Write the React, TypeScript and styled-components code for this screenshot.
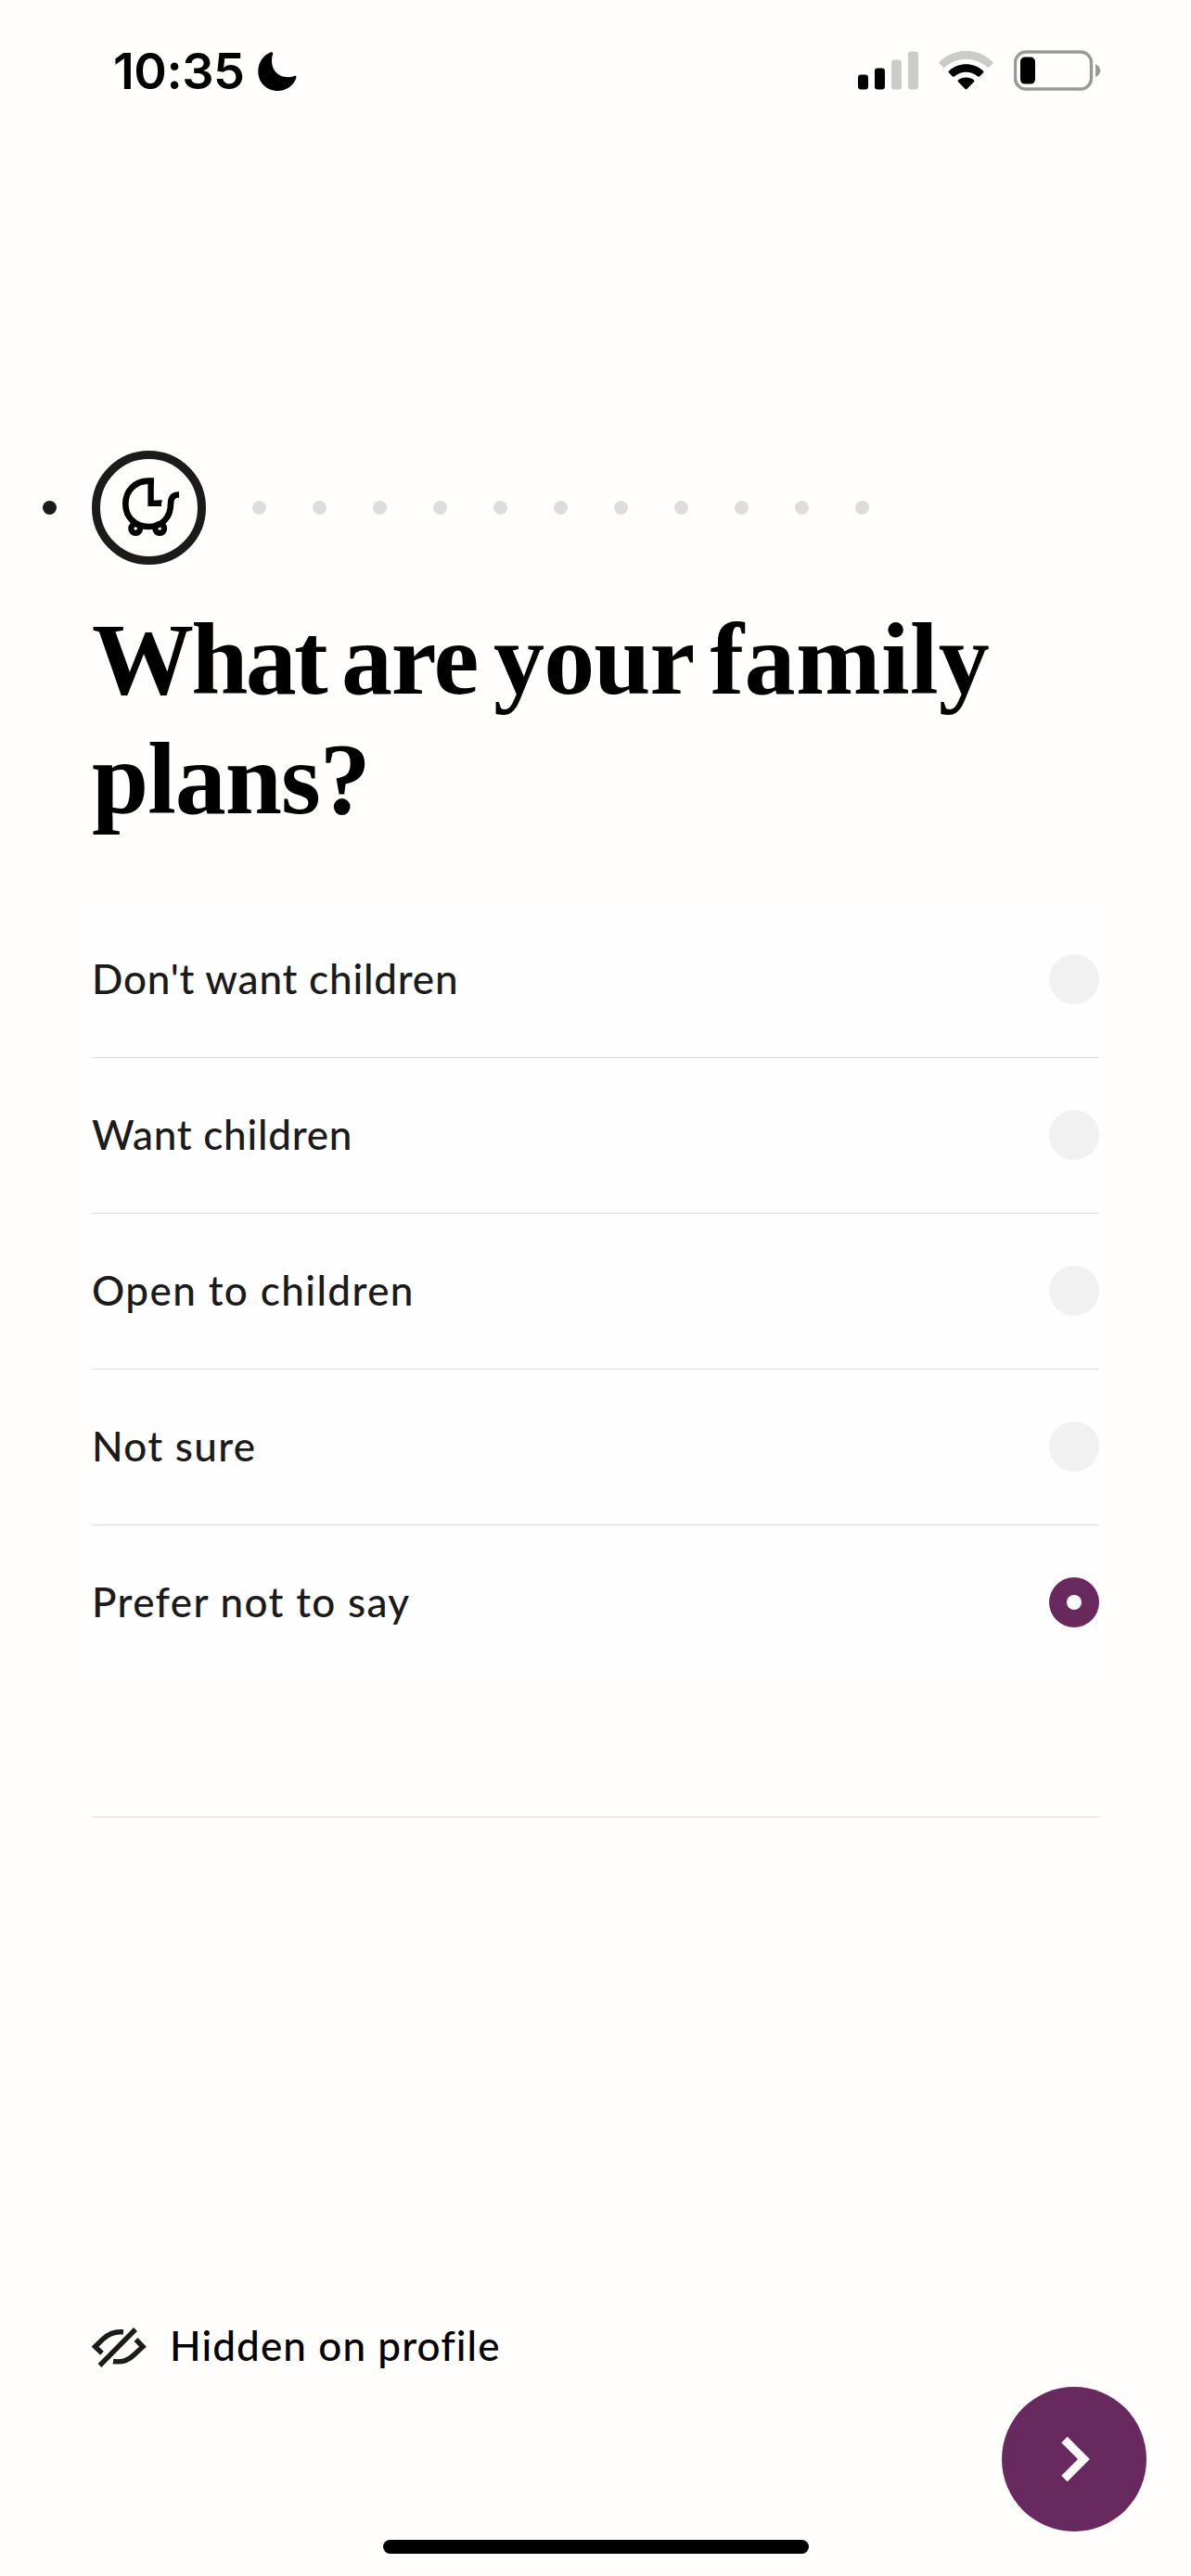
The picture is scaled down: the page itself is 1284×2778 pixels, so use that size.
import React, { useState } from "react";
import styled, { createGlobalStyle } from "styled-components";

const GlobalStyle = createGlobalStyle`
  * { box-sizing: border-box; }
  body { margin: 0; background: #fffefd; }
`;

const Screen = styled.div`
  display: flex;
  flex-direction: column;
  width: 1284px;
  height: 2778px;
  background: #fffefd;
  color: #000;
  font-family: Lato, "Liberation Sans", sans-serif;
  overflow: hidden;
`;

const StatusBar = styled.header`
  display: flex;
  align-items: center;
  justify-content: space-between;
  height: 152px;
  padding: 0 96px 0 122px;
`;

const Clock = styled.div`
  display: flex;
  align-items: center;
  gap: 14px;
  padding-top: 2px;
  font: 600 54px/64px Inter, "Liberation Sans", sans-serif;
  letter-spacing: -0.5px;
`;

const StatusIcons = styled.div`
  display: flex;
  align-items: center;
  gap: 22px;
`;

const Progress = styled.nav`
  display: flex;
  align-items: center;
  height: 123px;
  margin-top: 334px;
  padding-left: 46px;
`;

const Dot = styled.span<{ $done?: boolean }>`
  width: 15px;
  height: 15px;
  border-radius: 50%;
  background: ${(p) => (p.$done ? "#1b1b1b" : "#dddddd")};
`;

const Upcoming = styled.div`
  display: flex;
  gap: 50px;
  margin-left: 50px;
`;

const CurrentStep = styled.div`
  width: 123px;
  height: 123px;
  margin-left: 38px;
  border: 9px solid #1b1b1b;
  border-radius: 50%;

  svg { display: block; }
`;

const Title = styled.h1`
  margin: 38px 0 0;
  padding-left: 99px;
  font: 700 110px/129px "Liberation Serif", serif;
  word-spacing: -10.5px;
`;

const Word = styled.span<{ $tracking: number }>`
  letter-spacing: ${(p) => p.$tracking}px;
`;

const Options = styled.div`
  margin: 68px 99px 0;
  background: #fffefe;
`;

const Option = styled.button`
  display: flex;
  align-items: center;
  justify-content: space-between;
  width: 100%;
  height: 168px;
  padding: 0 0 1px;
  border: 0;
  border-bottom: 1px solid #dddddd;
  background: none;
  color: #1b1b1b;
  text-align: left;

  &:last-child { height: 167px; border-bottom: 0; }
`;

const Label = styled.span<{ $tracking: number }>`
  padding-bottom: 2px;
  font: 500 44px/60px Lato, "Liberation Sans", sans-serif;
  letter-spacing: ${(p) => p.$tracking}px;
`;

const Radio = styled.span<{ $on: boolean }>`
  display: grid;
  place-items: center;
  width: 54px;
  height: 54px;
  border-radius: 50%;
  background: ${(p) => (p.$on ? "#68295f" : "#f1f1f1")};

  &::after {
    content: "";
    width: 16px;
    height: 16px;
    border-radius: 50%;
    background: ${(p) => (p.$on ? "#fff" : "transparent")};
  }
`;

const Divider = styled.hr`
  width: 1086px;
  height: 1px;
  margin: 147px 0 0 99px;
  border: 0;
  background: #dddddd;
`;

const Visibility = styled.div`
  display: flex;
  align-items: center;
  gap: 24px;
  height: 60px;
  margin: 541px 0 0 99px;

  ${Label} { padding-bottom: 4px; }
`;

const NextButton = styled.button`
  display: grid;
  place-items: center;
  align-self: flex-end;
  width: 156px;
  height: 156px;
  margin: 13px 48px 0 0;
  padding: 0;
  border: 0;
  border-radius: 50%;
  background: #68295f;
`;

const HomeIndicator = styled.div`
  width: 459px;
  height: 15px;
  margin: 9px 0 0 413px;
  border-radius: 8px;
  background: #000;
`;

const Moon = () => (
  <svg width="42" height="42" viewBox="0 0 42 42">
    <path d="M13.5 0.6C15.2 -.2 16.6 .7 16.1 2.3C15.3 4.6 15 7 15 9.5C15 20 22 27.2 32.2 27.2C34.6 27.2 37 26.8 39.2 26C40.9 25.4 41.9 26.6 41.3 28.2C38.2 36.5 30.7 42 21.5 42C9.3 42 .3 33 .3 21C.3 11.8 5.4 4 13.5 .6Z" />
  </svg>
);

const Signal = () => (
  <svg width="65" height="42" viewBox="0 0 65 42">
    <rect y="25.5" width="11" height="16" rx="3.2" />
    <rect x="18" y="18.5" width="11" height="23" rx="3.2" />
    <rect x="36" y="9.5" width="11" height="32" rx="3.2" fill="#cbcbc9" />
    <rect x="54" y=".5" width="11" height="41" rx="3.2" fill="#cbcbc9" />
  </svg>
);

const Wifi = () => (
  <svg width="59" height="42" viewBox="0 0 59 42">
    <path d="M1 13.5Q0 12.5 1 11.5C17-4 42-4 58 11.5Q59 12.5 58 13.5L54.4 17.6Q53.4 18.6 52.4 17.6C39.5 5.8 19.5 5.8 6.6 17.6Q5.6 18.6 4.6 17.6Z" fill="#cbcbc9" />
    <path d="M11 23.4Q10 22.4 11 21.4C21.5 12 37.5 12 48 21.4Q49 22.4 48 23.4L44.2 27.2Q43.2 28.2 42.2 27.4C35 21.1 24 21.1 16.8 27.4Q15.8 28.2 14.8 27.2Z" />
    <path d="M21 33.3Q20 32.3 21 31.3C25.5 27.7 33.5 27.7 38 31.3Q39 32.3 38 33.3L30.4 41Q29.5 41.9 28.6 41Z" />
  </svg>
);

const Battery = () => (
  <svg width="95" height="44" viewBox="0 0 95 44">
    <rect x="1.5" y="2" width="82" height="40" rx="11.5" fill="none" stroke="#999998" strokeWidth="3.4" />
    <rect x="7" y="7.6" width="16" height="29" rx="5" />
    <path d="M88 15.2C91.2 16.4 93.4 19 93.4 22S91.2 27.7 88 29Z" fill="#999998" />
  </svg>
);

const Pram = () => (
  <svg width="105" height="105" viewBox="108 495 105 105" fill="none" stroke="#000">
    <path d="M162.6 516V542.7H174" strokeWidth="6.4" />
    <path d="M171 539.5H175.2L172.6 545.9H170Z" fill="#000" stroke="none" />
    <path d="M165.8 518.6H160C146 518.6 135.3 529 135.3 543.5C135.3 558 146 568 160 568C174.5 568 184 558 184 543.5C184 537 186.5 533.5 193 533.5" strokeWidth="6.6" />
    <circle cx="146.2" cy="570" r="4.9" strokeWidth="6.2" />
    <circle cx="172.2" cy="570" r="4.9" strokeWidth="6.2" />
  </svg>
);

const HiddenEye = () => (
  <svg width="60" height="44" viewBox="0 0 60 44" fill="none" stroke="#1b1b1b" strokeWidth="5.4">
    <path d="M34 6C25 5 18 8 12 13.5L3.5 21.7L11 28.8" />
    <path d="M47.5 14L55 21.7L46 30C39 37 32 39 23 37.5" />
    <path d="M8.5 42L47 3" />
  </svg>
);

const Chevron = () => (
  <svg width="156" height="156" viewBox="0 0 156 156" fill="none" stroke="#fffefd" strokeWidth="9">
    <path d="M67.5 57L88.5 78L67.5 99" />
  </svg>
);

const CHOICES = [
  { label: "Don't want children", tracking: 0.8 },
  { label: "Want children", tracking: 0.75 },
  { label: "Open to children", tracking: 1.4 },
  { label: "Not sure", tracking: 1.3 },
  { label: "Prefer not to say", tracking: 1.35 },
];

const UPCOMING_STEPS = 11;

export default function App() {
  const [selected, setSelected] = useState("Prefer not to say");

  return (
    <Screen>
      <GlobalStyle />
      <StatusBar>
        <Clock>
          10:35
          <Moon />
        </Clock>
        <StatusIcons>
          <Signal />
          <Wifi />
          <Battery />
        </StatusIcons>
      </StatusBar>
      <Progress>
        <Dot $done />
        <CurrentStep>
          <Pram />
        </CurrentStep>
        <Upcoming>
          {Array.from({ length: UPCOMING_STEPS }, (_, i) => (
            <Dot key={i} />
          ))}
        </Upcoming>
      </Progress>
      <Title>
        <Word $tracking={-2.7}>What</Word> <Word $tracking={-1.2}>are</Word>{" "}
        <Word $tracking={-0.9}>your</Word> <Word $tracking={0.4}>family</Word>
        <br />
        <Word $tracking={-1}>plans?</Word>
      </Title>
      <Options role="radiogroup">
        {CHOICES.map(({ label, tracking }) => (
          <Option
            key={label}
            role="radio"
            aria-checked={label === selected}
            onClick={() => setSelected(label)}
          >
            <Label $tracking={tracking}>{label}</Label>
            <Radio $on={label === selected} />
          </Option>
        ))}
      </Options>
      <Divider />
      <Visibility>
        <HiddenEye />
        <Label $tracking={1.1}>Hidden on profile</Label>
      </Visibility>
      <NextButton aria-label="Next">
        <Chevron />
      </NextButton>
      <HomeIndicator />
    </Screen>
  );
}
